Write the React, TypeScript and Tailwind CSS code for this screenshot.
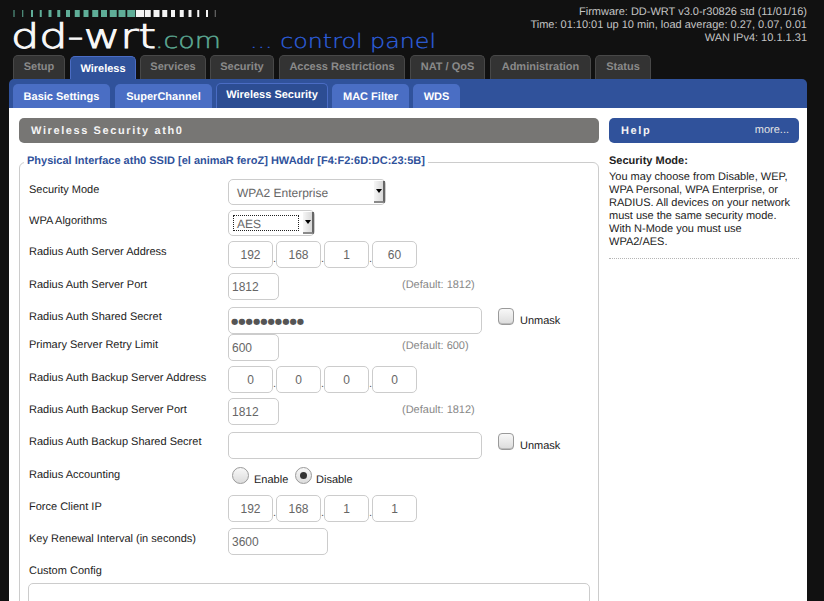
import React from "react";

const font = { fontFamily: '"Liberation Sans", Arial, sans-serif' };

const bars = [1, 1, 2, 2, 3, 3, 4, 5, 5, 6, 6, 7, 7, 8, 8, 6, 6, 5, 4, 4, 3, 2, 2, 1];

function Logo() {
  return (
    <svg width="445" height="55" viewBox="0 0 445 55" className="shrink-0">
      {bars.map((w, i) => (
        <rect key={i} x={13.5 + i * 8.75} y={10} width={w} height={7} fill={i < 14 ? "#5fae98" : i === 23 ? "#777" : "#f4f4f4"} />
      ))}
      <text x="11" y="47.5" fill="#f8f8f8" fontSize="34" fontWeight="200" stroke="#f8f8f8" strokeWidth="1" textLength="145" lengthAdjust="spacingAndGlyphs" style={{ fontFamily: '"DejaVu Sans", sans-serif' }}>dd-wrt</text>
      <text x="155" y="47.5" fill="#5fae98" fontSize="22" fontWeight="200" stroke="#5fae98" strokeWidth="0.4" textLength="66" lengthAdjust="spacingAndGlyphs" style={{ fontFamily: '"DejaVu Sans", sans-serif' }}>.com</text>
      <text x="250" y="48" fill="#2f63e0" fontSize="20" fontWeight="200" stroke="#2f63e0" strokeWidth="0.2" textLength="186" lengthAdjust="spacingAndGlyphs" style={{ fontFamily: '"DejaVu Sans", sans-serif' }}>... control panel</text>
    </svg>
  );
}

const mainTabs = [
  ["Setup", "w-[52px] mr-[5px]"],
  ["Wireless", "w-[66px] mr-[4px]"],
  ["Services", "w-[66px] mr-[4px]"],
  ["Security", "w-[64px] mr-[5px]"],
  ["Access Restrictions", "w-[126px] mr-[5px]"],
  ["NAT / QoS", "w-[75px] mr-[5px]"],
  ["Administration", "w-[101px] mr-[4px]"],
  ["Status", "w-[56px]"],
];

const subTabs = [
  ["Basic Settings", "w-[97px] mr-[5px]"],
  ["SuperChannel", "w-[97px] mr-[4px]"],
  ["Wireless Security", "w-[112px] mr-[4px]"],
  ["MAC Filter", "w-[77px] mr-[4px]"],
  ["WDS", "w-[47px]"],
];

const inputBase =
  "h-full rounded-[5px] border border-[#cccccc] bg-white text-[12px] text-[#666666] outline-none";

function Ip({ values }: { values: string[] }) {
  return (
    <div className="flex h-[27px] items-stretch">
      {values.map((v, i) => (
        <React.Fragment key={i}>
          {i > 0 && <span className="w-[3px] self-end pb-[3px] text-[11px] leading-[11px] text-[#555555]">.</span>}
          <input readOnly value={v} className={`${inputBase} w-[45px] text-center`} style={font} />
        </React.Fragment>
      ))}
    </div>
  );
}

function Text({ value, w }: { value: string; w: string }) {
  return (
    <div className={`h-[27px] ${w}`}>
      <input readOnly value={value} className={`${inputBase} w-full pl-[3px]`} style={font} />
    </div>
  );
}

function Select({ label, w, focus }: { label: string; w: string; focus?: boolean }) {
  return (
    <div className={`flex h-[26px] ${w} items-stretch rounded-[5px] border border-[#cccccc] bg-white text-[12px] text-[#666666]`}>
      <div className="flex min-w-0 flex-1 items-center pl-[4px]">
        {focus ? (
          <span className="flex h-[16px] w-[66px] items-center border border-dotted border-[#222222] pl-[3px] pt-[1px]">{label}</span>
        ) : (
          <span className="pl-[4px] pt-[1px]">{label}</span>
        )}
      </div>
      <div className="my-[1px] flex w-[11px] items-center justify-center border-r-2 border-b-2 border-r-[#666666] border-b-[#8a8a8a] bg-gradient-to-r from-[#f6f6f6] to-[#d8d8d8]">
        <span className="h-0 w-0 border-x-[3px] border-t-[4px] border-x-transparent border-t-black" />
      </div>
    </div>
  );
}

function Check() {
  return <span className="mt-[1px] block h-[17px] w-[16px] rounded-[4px] border border-[#9a9a9a] bg-gradient-to-b from-[#f8f8f8] to-[#dcdcdc] shadow-[inset_0_-1px_0_#bbbbbb]" />;
}

function Radio({ on }: { on?: boolean }) {
  return (
    <span className="flex h-[17px] w-[17px] items-center justify-center rounded-full border border-[#9a9a9a] bg-gradient-to-b from-[#f8f8f8] to-[#dcdcdc]">
      {on && <span className="block h-[7px] w-[7px] rounded-full bg-[#333333]" />}
    </span>
  );
}

function Row({ label, h, lab = "", children }: { label: string; h: string; lab?: string; children?: React.ReactNode }) {
  return (
    <div className={`flex items-start ${h}`}>
      <div className={`w-[200px] shrink-0 pl-[1px] text-[11px] leading-[22px] text-[#222222] ${lab}`}>{label}</div>
      {children}
    </div>
  );
}

function Def({ text }: { text: string }) {
  return <span className="ml-[123px] text-[11px] leading-[24px] text-[#888888]">{text}</span>;
}

function Unmask() {
  return (
    <div className="ml-[16px] flex items-start gap-[6px]">
      <Check />
      <span className="pt-[7px] text-[11px] leading-[14px] text-[#222222]">Unmask</span>
    </div>
  );
}

export default function App() {
  return (
    <div className="h-[601px] w-[824px] overflow-hidden bg-[#111111] [text-rendering:geometricPrecision]" style={font}>
      <header className="flex h-[55px] justify-between pr-[17px]">
        <Logo />
        <div className="pt-[6px] text-right text-[11px] leading-[13px] text-[#c4c4c4]">
          <div>Firmware: DD-WRT v3.0-r30826 std (11/01/16)</div>
          <div>Time: 01:10:01 up 10 min, load average: 0.27, 0.07, 0.01</div>
          <div>WAN IPv4: 10.1.1.31</div>
        </div>
      </header>

      <nav className="flex h-[24px] items-end pl-[13px]">
        {mainTabs.map(([t, w]) =>
          t === "Wireless" ? (
            <div key={t} className={`${w} flex h-[23px] items-center justify-center rounded-t-[5px] border border-b-0 border-[#4a6cc4] bg-[#30529b] pt-[2px] text-[11px] font-bold text-white`}>{t}</div>
          ) : (
            <div key={t} className={`${w} flex h-[24px] items-center justify-center rounded-t-[5px] border border-b-0 border-[#484848] bg-[#333333] text-[11px] font-bold text-[#8a8a8a]`}>{t}</div>
          )
        )}
      </nav>

      <div className="ml-[9px] flex h-[29px] w-[798px] items-end rounded-t-[5px] bg-[#30529b] pl-[4px]">
        {subTabs.map(([t, w]) =>
          t === "Wireless Security" ? (
            <div key={t} className={`${w} flex h-[25px] items-center justify-center rounded-t-[5px] border border-b-0 border-[#4a6cc4] bg-[#2c4d93] pb-[1px] text-[11px] font-bold text-white`}>{t}</div>
          ) : (
            <div key={t} className={`${w} flex h-[24px] items-center justify-center rounded-t-[5px] bg-[#4a6ec4] pt-[2px] text-[11px] font-bold text-white`}>{t}</div>
          )
        )}
      </div>

      <main className="ml-[9px] flex w-[798px] gap-[10px] bg-white pl-[10px] pt-[10px] pb-[40px]">
        <section className="w-[580px] shrink-0">
          <h2 className="flex h-[25px] items-center rounded-[5px] bg-[#777674] pl-[12px] pt-[2px] text-[11px] font-bold tracking-[1.6px] text-[#f4f4f4]">Wireless Security ath0</h2>

          <fieldset className="mt-[12px] rounded-[6px] border border-[#cccccc] px-[8px] pb-[20px] pt-[10px]">
            <legend className="-ml-[4px] px-[3px] pb-[1px] text-[11px] font-bold leading-[13px] text-[#30529b]">
              Physical Interface ath0 SSID [el animaR feroZ] HWAddr [F4:F2:6D:DC:23:5B]
            </legend>

            <Row label="Security Mode" h="h-[31px]"><Select label="WPA2 Enterprise" w="w-[158px]" /></Row>
            <Row label="WPA Algorithms" h="h-[31px]"><Select label="AES" w="w-[87px]" focus /></Row>
            <Row label="Radius Auth Server Address" h="h-[32px]"><Ip values={["192", "168", "1", "60"]} /></Row>
            <Row label="Radius Auth Server Port" h="h-[34px]" lab="pt-[1px]"><Text value="1812" w="w-[51px]" /><Def text="(Default: 1812)" /></Row>
            <Row label="Radius Auth Shared Secret" h="h-[27px]" lab="-mt-[1px]">
              <div className="h-[27px] w-[254px]">
                <input readOnly value="●●●●●●●●●●" className={`${inputBase} w-full pl-[2px] !text-[8.4px] !text-[#555555]`} style={{ fontFamily: '"DejaVu Sans", sans-serif' }} />
              </div>
              <Unmask />
            </Row>
            <Row label="Primary Server Retry Limit" h="h-[32px]"><Text value="600" w="w-[51px]" /><Def text="(Default: 600)" /></Row>
            <Row label="Radius Auth Backup Server Address" h="h-[32px]" lab="pt-[1px]"><Ip values={["0", "0", "0", "0"]} /></Row>
            <Row label="Radius Auth Backup Server Port" h="h-[34px]" lab="pt-[1px]"><Text value="1812" w="w-[51px]" /><Def text="(Default: 1812)" /></Row>
            <Row label="Radius Auth Backup Shared Secret" h="h-[35px]" lab="-mt-[1px]">
              <div className="h-[27px] w-[254px]">
                <input readOnly value="" className={`${inputBase} w-full`} style={font} />
              </div>
              <Unmask />
            </Row>
            <Row label="Radius Accounting" h="h-[28px]" lab="-mt-[3px]">
              <div className="flex items-start pl-[4px]">
                <Radio />
                <span className="ml-[5px] w-[41px] pt-[6px] text-[11px] leading-[14px] text-[#222222]">Enable</span>
                <Radio on />
                <span className="ml-[4px] pt-[6px] text-[11px] leading-[14px] text-[#222222]">Disable</span>
              </div>
            </Row>
            <Row label="Force Client IP" h="h-[33px]" lab="pt-[1px]"><Ip values={["192", "168", "1", "1"]} /></Row>
            <Row label="Key Renewal Interval (in seconds)" h="h-[32px]"><Text value="3600" w="w-[100px]" /></Row>
            <div className="h-[20px] pl-[1px] text-[11px] leading-[22px] text-[#222222]">Custom Config</div>
            <textarea readOnly className="mt-[3px] block h-[80px] w-[562px] rounded-[5px] border border-[#cccccc] bg-white" />
          </fieldset>
        </section>

        <aside className="w-[190px] shrink-0">
          <div className="flex h-[25px] items-center justify-between rounded-[5px] bg-[#30529b] pl-[12px] pr-[10px]">
            <h2 className="pt-[2px] text-[11px] font-bold tracking-[1.6px] text-[#f4f4f4]">Help</h2>
            <span className="text-[11px] text-[#e4e4e4]">more...</span>
          </div>
          <h3 className="mt-[11px] text-[11px] font-bold leading-[14px] text-[#222222]">Security Mode:</h3>
          <p className="mt-[3px] text-[11px] leading-[13px] text-[#222222]">
            You may choose from Disable, WEP, WPA Personal, WPA Enterprise, or RADIUS. All devices on your network must use the same security mode. With N-Mode you must use WPA2/AES.
          </p>
          <div className="mt-[9px] border-b border-dotted border-[#b5b5b5]" />
        </aside>
      </main>
    </div>
  );
}
